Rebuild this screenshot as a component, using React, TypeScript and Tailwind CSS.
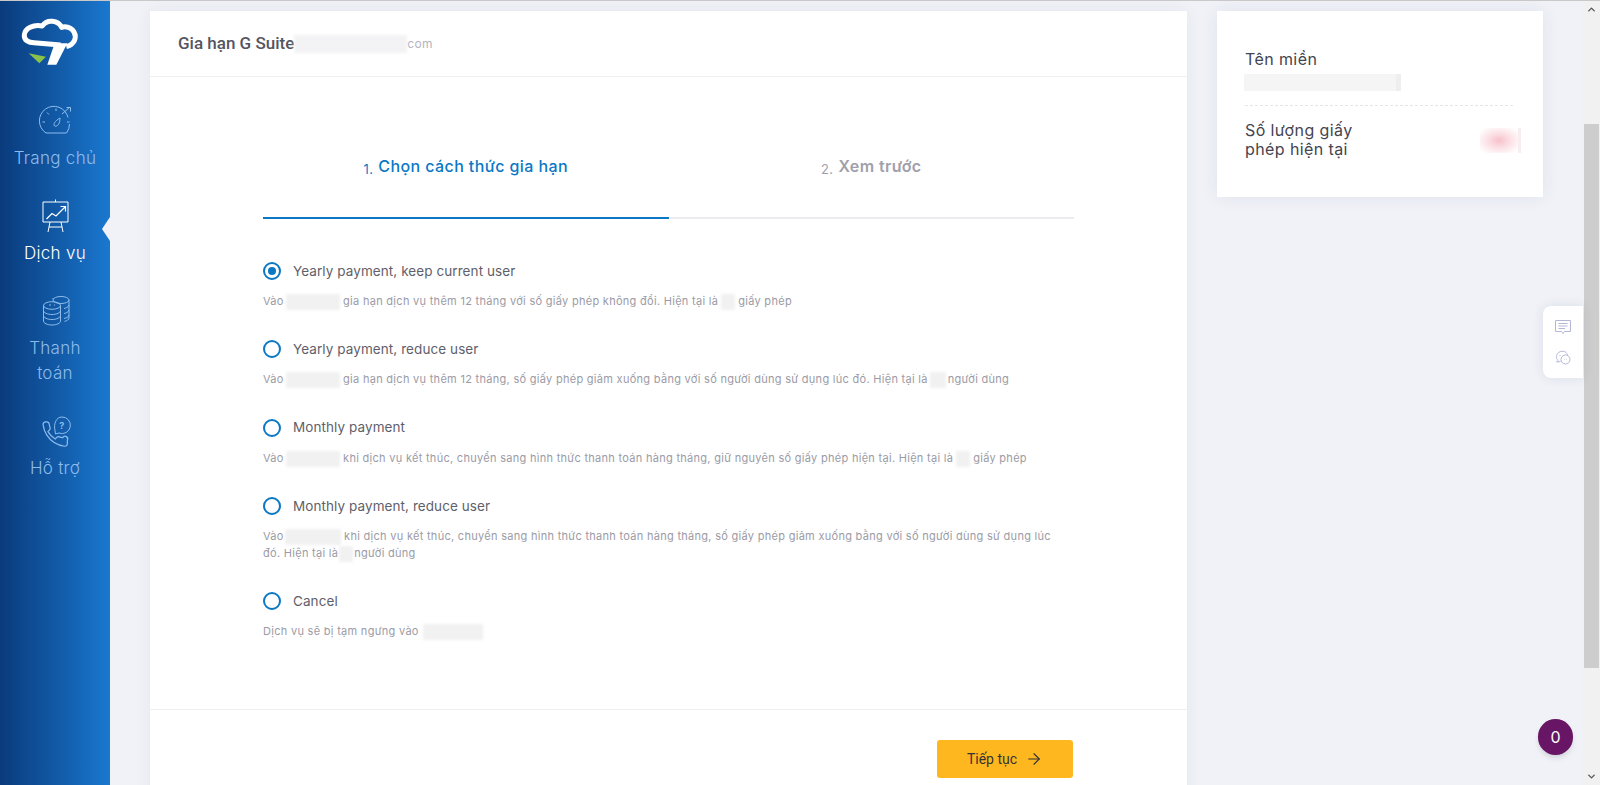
import { ArrowRight, ChevronDown, ChevronUp } from 'lucide-react';
import type { ReactNode } from 'react';

const Logo = () => (
    <svg width="70" height="56" viewBox="0 0 210 168" fill="none">
        <path
            d="M157 98C180 92 190 72 180 54C172 40 155 36 143 40C133 20 100 13 85 36C58 30 33 44 31 62C29 80 45 86 60 86L140 93"
            stroke="#fff"
            strokeWidth="15"
            strokeLinejoin="round"
        />
        <path d="M122 88H160L127 152H100Z" fill="#fff" />
        <path d="M44 118L96 128L76 148Z" fill="#8bc34a" />
    </svg>
);

const GaugeIcon = () => (
    <svg width="40" height="40" viewBox="0 0 40 40" fill="none" stroke="currentColor" strokeWidth="1">
        <path d="M11 33A14.5 14.5 0 1 1 33 17.5" />
        <path d="M11 33H31.5A14.5 14.5 0 0 0 34.5 24" />
        <path d="M27 14L35 7M31.5 7.5H35.5V11.5" />
        <path d="M21 8.5V11M12 12.5L14 14.5M7.5 22H10M32 22H34.5" />
        <path d="M19.5 26C18 24 20 21 25 18C25 23 23 27 19.5 26Z" />
    </svg>
);

const BoardIcon = () => (
    <svg width="40" height="40" viewBox="0 0 40 40" fill="none" stroke="currentColor" strokeWidth="1">
        <path d="M20.5 4.5V7M8 7H33V27H8Z" />
        <path d="M11.5 24L17 18.5L21 21L30 12M25.5 11.5H30.5V16.5" strokeWidth="1.2" />
        <path d="M15 27L13 37M26 27L28 37M14 32H27" />
    </svg>
);

const CoinsIcon = () => (
    <svg width="40" height="40" viewBox="0 0 40 40" fill="none" stroke="currentColor" strokeWidth="1">
        <ellipse cx="26" cy="10" rx="8" ry="3.5" />
        <path d="M34 10V28C34 29.5 32 30.8 29.5 31.4M18 9V8M34 15C34 17 30 18.5 29 18.5M34 20C34 22 30 23.5 29 23.5M34 25C34 27 30 28.5 29 28.5" />
        <ellipse cx="17" cy="15.5" rx="8.5" ry="3.8" />
        <path d="M8.5 15.5V31C8.5 33.2 12.3 35 17 35S25.500 33.200 25.500 31V15.500" />
        <path d="M8.5 20.500C8.500 22.700 12.300 24.500 17 24.500S25.500 22.700 25.500 20.500M8.500 25.500C8.500 27.700 12.300 29.500 17 29.500S25.500 27.700 25.500 25.500" />
        <path d="M14 15H16M19 15H20" />
    </svg>
);

const PhoneIcon = () => (
    <svg width="40" height="40" viewBox="0 0 40 40" fill="none" stroke="currentColor" strokeWidth="1">
        <path
            transform="translate(5.500 9.500) scale(1.220)"
            d="M22 16.920v3a2 2 0 0 1-2.180 2 19.790 19.790 0 0 1-8.630-3.070 19.500 19.500 0 0 1-6-6 19.790 19.790 0 0 1-3.070-8.670A2 2 0 0 1 4.110 2h1a2 2 0 0 1 2 1.720c.130.960.360 1.900.700 2.810a2 2 0 0 1-.450 2.110L6.090 9.910a16 16 0 0 0 6 6l1.270-1.270a2 2 0 0 1 2.110-.450c.910.340 1.850.570 2.810.700A2 2 0 0 1 22 16.920z"
        />
        <path d="M20 20.500C18.500 14 21 7 27 7A8.300 8.300 0 1 1 24 23L20.500 24Z" />
        <text x="27" y="19" textAnchor="middle" fontSize="9" fontWeight="700" fill="currentColor" stroke="none" fontFamily="Inter, sans-serif">?</text>
    </svg>
);

const NoteIcon = () => (
    <svg width="16" height="16" viewBox="0 0 16 16" fill="none" stroke="#b4b8d8" strokeWidth="1">
        <path d="M.5 1.500H15.500V12.500H9.500L8 14.500L6.500 12.500H.5Z" />
        <path d="M3.500 4.500H12.500M3.500 7H12.500M3.500 9.500H10" />
    </svg>
);

const ChatIcon = () => (
    <svg width="16" height="16" viewBox="0 0 16 16" fill="none" stroke="#b4b8d8" strokeWidth="1">
        <path d="M3 11.500C1 9.500 1 6 3 4S9 1.500 11 3.500C12 4.500 12.500 5.500 12.500 6.500" />
        <path d="M3 11.500L1.500 13L5.500 12.500" />
        <circle cx="10.500" cy="10.500" r="4.500" />
        <path d="M4.500 6.500H5.500M8 6.500H9M9 10.500H9.500M11.500 10.500H12" />
    </svg>
);

const Blur = ({ className }: { className: string }) => (
    <span className={`inline-block align-middle blur-[1.5px] ${className}`} />
);

const navItems = [
    { icon: <GaugeIcon />, label: 'Trang chủ', active: false },
    { icon: <BoardIcon />, label: 'Dịch vụ', active: true },
    { icon: <CoinsIcon />, label: 'Thanh toán', active: false },
    { icon: <PhoneIcon />, label: 'Hỗ trợ', active: false },
];

const boxed = 'h-[16px] bg-[#f1f1f2]';

const options: { title: string; checked?: boolean; desc: ReactNode }[] = [
    {
        title: 'Yearly payment, keep current user',
        checked: true,
        desc: (
            <>
                Vào<Blur className={`w-[54px] ml-[2px] ${boxed}`} /> gia hạn dịch vụ thêm 12 tháng với số giấy phép không đổi. Hiện tại là
                <Blur className={`w-[14px] mx-[3px] ${boxed}`} />giấy phép
            </>
        ),
    },
    {
        title: 'Yearly payment, reduce user',
        desc: (
            <>
                Vào<Blur className={`w-[54px] ml-[2px] ${boxed}`} /> gia hạn dịch vụ thêm 12 tháng, số giấy phép giảm xuống bằng với số người dùng sử dụng lúc đó. Hiện tại là
                <Blur className={`w-[16px] mx-[2px] ${boxed}`} />người dùng
            </>
        ),
    },
    {
        title: 'Monthly payment',
        desc: (
            <>
                Vào<Blur className={`w-[54px] ml-[2px] ${boxed}`} /> khi dịch vụ kết thúc, chuyển sang hình thức thanh toán hàng tháng, giữ nguyên số giấy phép hiện tại. Hiện tại là
                <Blur className={`w-[14px] mx-[3px] ${boxed}`} />giấy phép
            </>
        ),
    },
    {
        title: 'Monthly payment, reduce user',
        desc: (
            <>
                Vào<Blur className={`w-[56px] ml-[1px] ${boxed}`} /> khi dịch vụ kết thúc, chuyển sang hình thức thanh toán hàng tháng, số giấy phép giảm xuống bằng với số người dùng sử dụng lúc
                <br />
                đó. Hiện tại là
                <Blur className={`w-[14px] mx-[1px] ${boxed}`} />người dùng
            </>
        ),
    },
    {
        title: 'Cancel',
        desc: (
            <>
                Dịch vụ sẽ bị tạm ngưng vào <Blur className={`w-[60px] ml-[1px] ${boxed}`} />
            </>
        ),
    },
];

const App = () => {
    return (
        <div className="relative flex flex-col h-[785px] overflow-hidden bg-[#f0f2f7] font-['Inter',sans-serif]">
            <div className="h-px shrink-0 bg-[#c9c9c9]" />
            <div className="flex flex-1 min-h-0">
                {/* Sidebar */}
                <aside className="relative w-[110px] shrink-0 bg-gradient-to-r from-[#0a3b7c] to-[#1a78d0]">
                    <div className="pl-[14px] pt-[13px]">
                        <Logo />
                    </div>
                    <nav className="mt-[30px] flex flex-col gap-[24px]">
                        {navItems.map((item) => (
                            <div
                                key={item.label}
                                className={`flex flex-col items-center text-center text-[17px] leading-[25px] font-light tracking-[0.3px] ${item.active ? 'text-white' : 'text-[#8dbcec]'}`}
                            >
                                <div className="h-[40px]">{item.icon}</div>
                                <div className="mt-[6px] w-[90px]">{item.label}</div>
                            </div>
                        ))}
                    </nav>
                    <div className="absolute right-[-8px] top-[216px] h-[24px] w-[16px] bg-[#f0f2f7] [clip-path:polygon(50%_0,0_50%,50%_100%,100%_100%,100%_0)]" />
                </aside>

                {/* Main column */}
                <main className="flex flex-1 min-w-0 gap-[30px] pl-[40px] pr-[40px] pt-[10px]">
                    <section className="w-[1037px] shrink-0 h-[900px] bg-white shadow-[0_0_16px_rgba(40,50,110,0.06)]">
                        <header className="flex h-[66px] items-center border-b border-[#eeeef3] pl-[28px]">
                            <span className="font-['Roboto',sans-serif] text-[17px] font-medium text-[#55555f]">Gia hạn G Suite</span>
                            <span className="inline-block h-[18px] w-[113px] bg-[#f3f3f5] blur-[1.5px]" />
                            <span className="text-[12px] tracking-[0.3px] text-[#b4b4c0]">com</span>
                        </header>

                        <div className="px-[113px] border-b border-[#eeeef3] pb-[69px]">
                            <div className="grid grid-cols-2 pt-[76px]">
                                <div className="flex h-[66px] items-start justify-center border-b-2 border-[#0b78c5] text-[16px] font-medium tracking-[0.4px] text-[#0b78c5]">
                                    <span className="mt-[7px] mr-[5px] text-[13px] font-normal">1.</span>
                                    <span className="mt-[1px]">Chọn cách thức gia hạn</span>
                                </div>
                                <div className="flex h-[66px] items-start justify-center border-b-2 border-[#ebecf2] text-[16px] font-semibold tracking-[0.4px] text-[#a0a0ab]">
                                    <span className="mt-[7px] mr-[5px] text-[13px] font-normal">2.</span>
                                    <span className="mt-[1px]">Xem trước</span>
                                </div>
                            </div>

                            <div className="mt-[42px] flex flex-col gap-[29.3px]">
                                {options.map((opt) => (
                                    <div key={opt.title}>
                                        <div className="flex h-[20px] items-center gap-[12px]">
                                            <span className="flex h-[18px] w-[18px] items-center justify-center rounded-full border-2 border-[#0b78c5]">
                                                {opt.checked && <span className="h-[8px] w-[8px] rounded-full bg-[#0b78c5]" />}
                                            </span>
                                            <span className="text-[13.5px] tracking-[0.08px] text-[#5f5f6b]">{opt.title}</span>
                                        </div>
                                        <p className="mt-[12px] text-[11px] leading-[17px] tracking-[0.29px] text-[#9b9ba6]">{opt.desc}</p>
                                    </div>
                                ))}
                            </div>
                        </div>

                        <div className="flex justify-end pr-[114px] pt-[30px]">
                            <button className="flex h-[38px] w-[136px] items-center justify-center gap-[8px] rounded-[3px] bg-[#ffb71f] font-['Roboto',sans-serif] text-[14px] text-[#333]">
                                Tiếp tục
                                <ArrowRight size={18} strokeWidth={1.5} />
                            </button>
                        </div>
                    </section>

                    <section className="w-[326px] shrink-0 h-[186px] bg-white px-[28px] pt-[38px] shadow-[0_0_16px_rgba(40,50,110,0.08)] text-[16px] tracking-[0.4px] text-[#44444f]">
                        <div className="leading-[20px]">Tên miền</div>
                        <div className="mt-[5px] -ml-px h-[17px] w-[157px] border-r-[5px] border-[#eeeeee] bg-[#f5f5f6] blur-[0.5px]" />
                        <div className="mt-[14px] w-[268px] border-t border-dashed border-[#e6e6ea]" />
                        <div className="mt-[15px] flex items-center justify-between">
                            <div className="leading-[19px]">Số lượng giấy<br />phép hiện tại</div>
                            <div className="-mr-[6px] h-[25px] w-[41px] border-r-[3px] border-[#f8eef0] bg-[radial-gradient(ellipse,#f8c0cb,#fbdfe4_40%,#fff_90%)]" />
                        </div>
                    </section>
                </main>

                {/* Scrollbar */}
                <div className="flex w-[17px] shrink-0 flex-col bg-[#f1f1f1]">
                    <div className="flex h-[123px] justify-center pt-[3px] text-[#555]">
                        <ChevronUp size={11} strokeWidth={3} />
                    </div>
                    <div className="mx-px h-[544px] bg-[#cdcdcd]" />
                    <div className="flex flex-1 items-end justify-center pb-[3px] text-[#555]">
                        <ChevronDown size={11} strokeWidth={3} />
                    </div>
                </div>
            </div>

            {/* Floating widgets */}
            <div className="absolute left-[1543px] top-[306px] flex h-[72px] w-[40px] flex-col items-center justify-center gap-[14px] rounded-l-lg bg-white shadow-[0_0_12px_rgba(40,50,110,0.1)]">
                <NoteIcon />
                <ChatIcon />
            </div>
            <div className="absolute left-[1538px] top-[719px] flex h-[36px] w-[35px] items-center justify-center rounded-full bg-[#671564] text-[16px] text-white shadow-md">
                0
            </div>
        </div>
    );
};

export default App;
